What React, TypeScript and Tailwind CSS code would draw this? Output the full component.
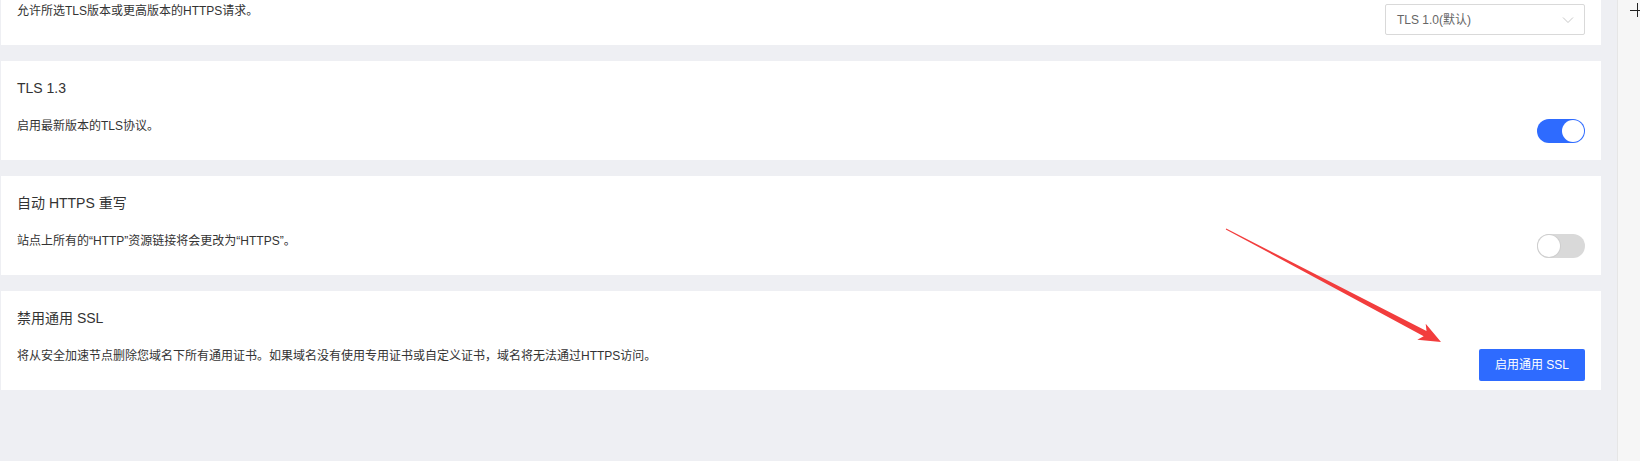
import React from "react";

const FONT = { fontFamily: '"Liberation Sans", "Noto Sans CJK SC", sans-serif' };

function Toggle({ on }: { on: boolean }) {
  return (
    <div
      className={
        "mt-[3px] w-12 h-6 rounded-full p-px flex items-center " +
        (on ? "bg-[#2e6bff] justify-end" : "bg-[#d9d9d9] justify-start")
      }
    >
      <div
        className={
          "w-[22px] h-[22px] rounded-full bg-white " +
          (on ? "" : "shadow-[0_0_0_1px_#cfcfcf]")
        }
      />
    </div>
  );
}

function SettingCard({
  title,
  desc,
  control,
}: {
  title: string;
  desc: string;
  control: React.ReactNode;
}) {
  return (
    <div className="h-[99px] bg-white px-4 pt-4 shrink-0">
      <div className="text-[14px] leading-[22px] text-[#333]">{title}</div>
      <div className="mt-[17px] flex items-start justify-between">
        <div className="text-[12px] leading-[20px] text-[#333]">{desc}</div>
        {control}
      </div>
    </div>
  );
}

export default function App() {
  return (
    <div className="relative h-[461px] w-full flex overflow-hidden" style={FONT}>
      <div className="flex-1 bg-[#eeeff3] pl-px pr-4 flex flex-col gap-4">
        {/* first card is scrolled mostly out of view */}
        <div className="h-[45px] bg-white px-4 pt-px flex items-start justify-between shrink-0">
          <div className="text-[12px] leading-[20px] text-[#333]">
            允许所选TLS版本或更高版本的HTTPS请求。
          </div>
          <div className="mt-[3px] w-[200px] h-[31px] border border-[#d9d9d9] rounded-[2px] flex items-center justify-between pl-[11px] pr-[10px]">
            <span className="text-[12px] text-[#666]">TLS 1.0(默认)</span>
            <svg width="12" height="8" viewBox="0 0 12 8" fill="none">
              <path d="M1 1.5l5 5 5-5" stroke="#c8c8c8" strokeWidth="1" />
            </svg>
          </div>
        </div>

        <SettingCard title="TLS 1.3" desc="启用最新版本的TLS协议。" control={<Toggle on />} />
        <SettingCard
          title="自动 HTTPS 重写"
          desc="站点上所有的“HTTP”资源链接将会更改为“HTTPS”。"
          control={<Toggle on={false} />}
        />
        <SettingCard
          title="禁用通用 SSL"
          desc="将从安全加速节点删除您域名下所有通用证书。如果域名没有使用专用证书或自定义证书，域名将无法通过HTTPS访问。"
          control={
            <button className="mt-[3px] w-[106px] h-8 rounded-[2px] bg-[#2e6bff] text-white text-[12px]">
              启用通用 SSL
            </button>
          }
        />
      </div>

      <div className="w-[23px] border-l border-[#e6e6e6] bg-[#f6f6f6] relative">
        <svg className="absolute left-[12px] top-[3px]" width="14" height="14" viewBox="0 0 14 14">
          <path d="M0 7.5h14M7.5 0v14" stroke="#222" strokeWidth="1" />
        </svg>
      </div>

      {/* red annotation arrow */}
      <svg className="absolute left-0 top-0 pointer-events-none" width="1640" height="461">
        <polygon
          points="1225.8,229.4 1423.7,336.3 1417.3,339.8 1441,342 1425.7,323.8 1426.5,330.9 1226.2,228.6"
          fill="#f23d3d"
        />
      </svg>
    </div>
  );
}
